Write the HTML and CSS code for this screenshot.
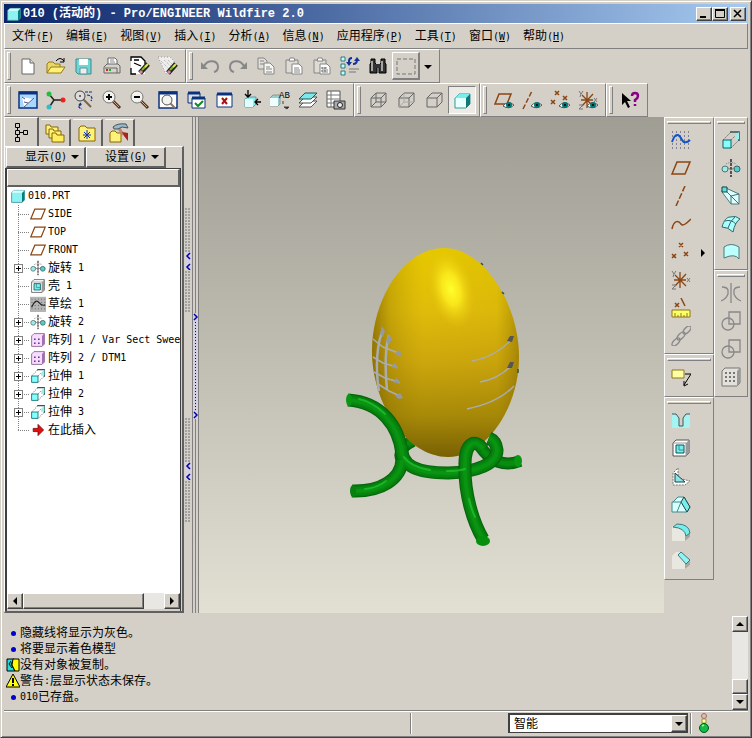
FILE: index.html
```html
<!DOCTYPE html>
<html lang="zh-CN">
<head>
    <meta charset="UTF-8">
    <meta name="viewport" content="width=device-width, initial-scale=1.0">
    <title>010 (活动的) - Pro/ENGINEER Wildfire 2.0</title>
    <link rel="stylesheet" href="styles.css">
</head>
<body>
    <svg class="defs" width="0" height="0" aria-hidden="true">
        <defs>
            <!-- iconos del árbol y de las barras -->
            <symbol id="plane" viewBox="0 0 20 20"><path d="M1 16L6 4H19L14 16Z" fill="none" stroke="#8b4513" stroke-width="1.5"/></symbol>
            <symbol id="part" viewBox="0 0 20 20"><path d="M2 6L5 3H18V15L15 18H2Z" fill="#8ef2f2" stroke="#3a8f94" /><path d="M15 6L18 3V15L15 18Z" fill="#067d80"/><path d="M2 6L5 3H18L15 6Z" fill="#d8ffff"/></symbol>
            <symbol id="revolve" viewBox="0 0 20 20"><path d="M10 1V19" stroke="#000" stroke-width="1.2" stroke-dasharray="3 1"/><path d="M5 6Q10 3 15 6" fill="none" stroke="#777" stroke-dasharray="1 1"/><circle cx="4" cy="11" r="3" fill="#a5e8e4" stroke="#477"/><circle cx="16" cy="11" r="3" fill="#5cc" stroke="#366"/><path d="M6 9L10 12L14 9" fill="none" stroke="#777"/></symbol>
            <symbol id="shell" viewBox="0 0 20 20"><path d="M2 5L5 2H18V15L15 18H2Z" fill="#fff" stroke="#555"/><path d="M15 5L18 2V15L15 18Z" fill="#999"/><path d="M2 5H15V18" fill="none" stroke="#999"/><path d="M5 7H13V15H5Z" fill="#7ee" stroke="#055"/><path d="M8 7V12H13" fill="none" stroke="#488"/></symbol>
            <symbol id="pattern" viewBox="0 0 20 20"><path d="M2 5L5 2H18V15L15 18H2Z" fill="#f6dcff" stroke="#858"/><path d="M15 5L18 2V15L15 18Z" fill="#a070b0"/><path d="M5 9h2M10 9h2M5 14h2M10 14h2" stroke="#639" stroke-width="2"/></symbol>
            <symbol id="extrude" viewBox="0 0 20 20"><path d="M2 10L10 2M10 18L18 10M10 10L14 6" fill="none" stroke="#777" stroke-dasharray="2 1"/><path d="M9 2H18V11" fill="none" stroke="#355" stroke-width="1.5"/><path d="M18 2L14 6V10L18 9Z" fill="#9ee"/><path d="M2 10H10V18H2Z" fill="#8ff" stroke="#066"/></symbol>
            <symbol id="eye" viewBox="0 0 20 20"><path d="M9 16Q14 10 20 15Q15 20 9 16Z" fill="#fff" stroke="#555"/><circle cx="15" cy="15" r="3" fill="#077"/><circle cx="15" cy="15" r="1" fill="#000"/></symbol>
            <symbol id="sketch" viewBox="0 0 20 20"><rect x="0" y="1" width="20" height="19" fill="#b4b4b4"/><path d="M2 4H19M2 8H19M2 12H19M2 16H19" stroke="#444" stroke-dasharray="1 3"/><path d="M2 14Q7 3 11 8T19 11" fill="none" stroke="#222" stroke-width="1.5"/></symbol>
            <symbol id="axis" viewBox="0 0 20 20"><path d="M5 20L14 0" stroke="#8b4513" stroke-width="1.5" stroke-dasharray="6 2"/></symbol>
            <symbol id="points" viewBox="0 0 20 20"><path d="M8 1l4 4m0-4l-4 4M1 12l4 4m0-4l-4 4M13 10l4 4m0-4l-4 4" stroke="#8b4513" stroke-width="1.5"/></symbol>
            <symbol id="csys" viewBox="0 0 20 20"><path d="M4 5L15 16M15 4L4 16M9 2V18M3 10H15" stroke="#8b4513" stroke-width="1.3"/><path d="M1 1l2 3l2-3M3 4l-1 3M16 8l3 4m0-4l-3 4M1 15h4l-4 4h4" fill="none" stroke="#777"/></symbol>
            <symbol id="lens" viewBox="0 0 20 20"><path d="M11 11L18 18" stroke="#532" stroke-width="3"/><path d="M11 11L17 17" stroke="#c9a78c"/><circle cx="7" cy="7" r="6" fill="#f2f2ee" stroke="#777"/></symbol>
            <symbol id="copy" viewBox="0 0 20 20"><path d="M2 2H8L11 5V13H2Z" fill="#e2dfd8" stroke="#858585"/><path d="M8 7H14L18 11V18H8Z" fill="#f6f6f3" stroke="#858585"/><path d="M4 5H8M4 8H8M10 11H14M10 13H16M10 16H16" stroke="#858585"/></symbol>
            <symbol id="paste" viewBox="0 0 20 20"><path d="M2 4H14V17H2Z" fill="#dedbd4" stroke="#858585"/><path d="M5 5L6 2H10L11 5Z" fill="#fff" stroke="#858585"/><path d="M8 8H15L18 11V18H8Z" fill="#fff" stroke="#858585"/><path d="M10 12H15M10 14H16M10 16H16" stroke="#858585"/></symbol>
            <symbol id="cube" viewBox="0 0 20 20"><path d="M3 8L8 3H18V12L13 17H3Z M3 8H13V17M13 8L18 3" fill="none" stroke="#666"/></symbol>
            <symbol id="pencil" viewBox="0 0 20 20"><path d="M10 17L18 8" stroke="#222" stroke-width="5"/><path d="M10 17L12 15" stroke="#d8a" stroke-width="3"/><path d="M12 14L17 9" stroke="#8b2" stroke-width="2"/><path d="M15 11L18 8" stroke="#dd6" stroke-width="2"/></symbol>
            <symbol id="intersect" viewBox="0 0 20 20"><path d="M8 1H19V13H8Z" fill="none" stroke="#888" stroke-width="1.3"/><circle cx="7" cy="13" r="6" fill="none" stroke="#888" stroke-width="1.3"/></symbol>
            <!-- piezas del modelo -->
            <path id="eggShape" d="M245 131C284 131 320 186 320 240C320 292 286 340 249 340C207 340 173 286 173 234C173 182 205 131 245 131Z"/>
            <g id="backLegs">
                <path d="M214 324C200 330 199 340 205 345"/>
                <path d="M281 329C291 345 306 350 321 344"/>
            </g>
            <g id="frontLegs">
                <path d="M149 283C182 285 200 309 203 337"/>
                <path d="M153 374C182 375 202 362 203 343"/>
                <path d="M203 328C200 350 220 356 249 356C278 355 298 347 298 333Q297 324 290 321"/>
            </g>
            <path id="loopLeg" d="M284 332C276 321 266 326 266 347C265 376 274 405 284 422"/>
            <linearGradient id="egg" x1="0" y1="0" x2="0" y2="1">
                <stop offset="0" stop-color="#e6c800"/>
                <stop offset="0.3" stop-color="#e0bc0a"/>
                <stop offset="0.55" stop-color="#cca60c"/>
                <stop offset="0.8" stop-color="#a88a08"/>
                <stop offset="1" stop-color="#786003"/>
            </linearGradient>
            <linearGradient id="eggSide" x1="0" y1="0" x2="1" y2="0">
                <stop offset="0" stop-color="#654e00" stop-opacity="0.6"/>
                <stop offset="0.12" stop-color="#705800" stop-opacity="0.25"/>
                <stop offset="0.35" stop-color="#a08000" stop-opacity="0"/>
                <stop offset="0.85" stop-color="#806500" stop-opacity="0.05"/>
                <stop offset="1" stop-color="#654e00" stop-opacity="0.4"/>
            </linearGradient>
            <radialGradient id="shine">
                <stop offset="0" stop-color="#ffff2c"/>
                <stop offset="0.4" stop-color="#fff020" stop-opacity="0.8"/>
                <stop offset="1" stop-color="#e8c810" stop-opacity="0"/>
            </radialGradient>
        </defs>
    </svg>

    <div class="window">
        <header class="title-bar">
            <svg class="title-icon"><use href="#part"/></svg>
            <h1>010 (活动的) - Pro/ENGINEER Wildfire 2.0</h1>
            <button class="win-btn" aria-label="最小化"><svg viewBox="0 0 12 10"><path d="M2 8H8" stroke="#000" stroke-width="2"/></svg></button>
            <button class="win-btn" aria-label="最大化"><svg viewBox="0 0 12 10"><path d="M1.500 2V8.500H10.500V2" fill="none" stroke="#000"/><path d="M1 1H11" stroke="#000" stroke-width="2"/></svg></button>
            <button class="win-btn close" aria-label="关闭"><svg viewBox="0 0 12 10"><path d="M2 1L9 8M9 1L2 8" stroke="#000" stroke-width="1.5"/></svg></button>
        </header>

        <nav class="menu-bar">
            <button>文件<span class="en">(<u>F</u>)</span></button>
            <button>编辑<span class="en">(<u>E</u>)</span></button>
            <button>视图<span class="en">(<u>V</u>)</span></button>
            <button>插入<span class="en">(<u>I</u>)</span></button>
            <button>分析<span class="en">(<u>A</u>)</span></button>
            <button>信息<span class="en">(<u>N</u>)</span></button>
            <button>应用程序<span class="en">(<u>P</u>)</span></button>
            <button>工具<span class="en">(<u>T</u>)</span></button>
            <button>窗口<span class="en">(<u>W</u>)</span></button>
            <button>帮助<span class="en">(<u>H</u>)</span></button>
        </nav>

        <div class="toolbar">
            <div class="tool-group">
                <button class="tool" aria-label="新建"><svg viewBox="0 0 20 20"><path d="M4 3H12L16 7V18H4Z" fill="#fff" stroke="#666"/><path d="M12 3V7H16" fill="#ddd" stroke="#666"/></svg></button>
                <button class="tool" aria-label="打开"><svg viewBox="0 0 20 20"><path d="M1 17V8L3 6H7L9 8H14V11" fill="#e8d868" stroke="#997a10"/><path d="M1 17L5 11H19L15 17Z" fill="#fff27a" stroke="#997a10"/><path d="M10 5Q14 0 18 5M18 2V6H14" fill="none" stroke="#000"/></svg></button>
                <button class="tool" aria-label="保存"><svg viewBox="0 0 20 20"><path d="M2 3H17V18H4L2 16Z" fill="#6fd6d6" stroke="#488"/><path d="M5 3H14V9H5Z" fill="#fff"/><path d="M6 12H13V18H6Z" fill="#eee" stroke="#599"/></svg></button>
                <button class="tool" aria-label="打印"><svg viewBox="0 0 20 20"><path d="M6 9V2H13L15 4V9" fill="#fff" stroke="#666"/><path d="M8 4H12M8 6H13" stroke="#888"/><path d="M2 11L5 8H16L18 10V17H2Z" fill="#d6d3cb" stroke="#666"/><path d="M3 12H15V17" fill="none" stroke="#666"/><path d="M4 14H6" stroke="#c22" stroke-width="2"/><path d="M7 14H9" stroke="#2a2" stroke-width="2"/></svg></button>
                <button class="tool" aria-label="拭除当前"><svg viewBox="0 0 20 20"><path d="M1 1H11L15 5V18H1Z" fill="#fff"/><path d="M1 5V1H11L15 5V8M1 12V18H6M4 4H9M4 7L11 10" fill="none" stroke="#000" stroke-width="1.3"/><use href="#pencil"/></svg></button>
                <button class="tool" aria-label="拭除不显示"><svg viewBox="0 0 20 20"><path d="M0 1H12L16 5V9L8 18Z" fill="#eee" stroke="#999" stroke-dasharray="1 2"/><path d="M3 5L12 14M6 4L15 12M10 4L15 9" stroke="#aaa" stroke-dasharray="1 1"/><use href="#pencil"/></svg></button>
            </div>
            <div class="tool-group">
                <button class="tool" aria-label="撤消"><svg viewBox="0 0 20 20"><path d="M4 10C8 3 18 4 18 11Q18 15 14 16" fill="none" stroke="#888" stroke-width="2"/><path d="M1 6V13H8Z" fill="#888"/></svg></button>
                <button class="tool" aria-label="重做"><svg viewBox="0 0 20 20"><path d="M16 10C12 3 2 4 2 11Q2 15 6 16" fill="none" stroke="#888" stroke-width="2"/><path d="M19 6V13H12Z" fill="#888"/></svg></button>
                <button class="tool" aria-label="复制"><svg><use href="#copy"/></svg></button>
                <button class="tool" aria-label="粘贴"><svg><use href="#paste"/></svg></button>
                <button class="tool" aria-label="选择性粘贴"><svg viewBox="0 0 20 20"><use href="#paste"/><path d="M10 11v6M13 11v6" stroke="#666" stroke-dasharray="2 1"/></svg></button>
                <button class="tool" aria-label="再生"><svg viewBox="0 0 20 20"><path d="M1 1H5V5H1ZM1 8H5V12H1ZM1 15H5V19H1Z" fill="#bff" stroke="#377"/><path d="M9 7V5Q9 2 12 2M13 8Q17 8 17 4" fill="none" stroke="#139" stroke-width="2"/><path d="M6 6H12L9 10ZM14 5H20L17 1Z" fill="#139"/><path d="M9 13H19M9 16H16" stroke="#777"/></svg></button>
                <button class="tool" aria-label="查找"><svg viewBox="0 0 20 20"><path d="M3 3H7V7L9 9V17H2V8L3 7ZM13 3H17V7L18 8V17H11V9L13 7Z" fill="#333" stroke="#000"/><path d="M8 8H12V12H8Z" fill="#333"/><path d="M4 5V15M14 5V15" stroke="#ccc" stroke-width="1.5"/></svg></button>
                <button class="tool raised" aria-label="选取"><svg viewBox="0 0 20 20"><path d="M1 3H19V18H1Z" fill="none" stroke="#777" stroke-dasharray="4 2"/></svg></button>
                <button class="drop" aria-label="选取选项"><i class="arrow-down"></i></button>
            </div>
        </div>

        <div class="toolbar">
            <div class="tool-group">
                <button class="tool" aria-label="重画"><svg viewBox="0 0 20 20"><path d="M1 2H19V18H1Z" fill="#a8d8ff" stroke="#0a3280" stroke-width="1.5"/><path d="M1 3H19" stroke="#0a3280" stroke-width="3"/><path d="M4 7L15 9L6 17Z" fill="#fff"/><path d="M6 17L16 8" stroke="#568"/><path d="M4 7l3 2M6 12l4 1" stroke="#557"/></svg></button>
                <button class="tool" aria-label="旋转中心"><svg viewBox="0 0 20 20"><path d="M3 4L8 10L4 16M8 10H17" fill="none" stroke="#222" stroke-width="1.5"/><circle cx="3" cy="4" r="2.500" fill="#2b4"/><circle cx="3" cy="17" r="2.500" fill="#3bc"/><circle cx="17" cy="10" r="2.500" fill="#e22"/></svg></button>
                <button class="tool" aria-label="定向模式"><svg viewBox="0 0 20 20"><path d="M9 9L17 17" stroke="#764" stroke-width="2"/><circle cx="6" cy="6" r="5" fill="#ddd" stroke="#444"/><circle cx="6" cy="6" r="1" fill="#444"/><path d="M11 2H18M13 5Q20 6 17 11M7 13Q2 17 8 19M5 16l3-2" fill="none" stroke="#138" stroke-width="1.2" stroke-dasharray="3 1"/></svg></button>
                <button class="tool" aria-label="放大"><svg viewBox="0 0 20 20"><use href="#lens"/><path d="M4 7H10M7 4V10" stroke="#000" stroke-width="2"/></svg></button>
                <button class="tool" aria-label="缩小"><svg viewBox="0 0 20 20"><use href="#lens"/><path d="M4 7H10" stroke="#000" stroke-width="2"/></svg></button>
                <button class="tool" aria-label="重新调整"><svg viewBox="0 0 20 20"><path d="M1 2H19V18H1Z" fill="#fff" stroke="#0a3280" stroke-width="1.5"/><path d="M1 3H19" stroke="#0a3280" stroke-width="3"/><path d="M12 13L17 18" stroke="#876" stroke-width="2"/><circle cx="9" cy="10" r="5" fill="#f4f4f0" stroke="#555"/></svg></button>
                <button class="tool" aria-label="激活"><svg viewBox="0 0 20 20"><path d="M2 3H14V13H2Z" fill="#ddd" stroke="#0a3280"/><path d="M2 3H14" stroke="#0a3280" stroke-width="3"/><path d="M6 8H19V18H6Z" fill="#fff" stroke="#0a3280"/><path d="M6 8H19" stroke="#0a3280" stroke-width="3"/><path d="M9 13L12 16L17 11" fill="none" stroke="#182" stroke-width="2"/></svg></button>
                <button class="tool" aria-label="关闭窗口"><svg viewBox="0 0 20 20"><path d="M3 4H18V17H3Z" fill="#fff" stroke="#0a3280"/><path d="M3 4H18" stroke="#0a3280" stroke-width="3"/><path d="M8 8L13 14M13 8L8 14" stroke="#a11" stroke-width="2"/></svg></button>
                <button class="tool" aria-label="保存视图"><svg viewBox="0 0 20 20"><path d="M3 9L6 7H14V14L11 17H3Z" fill="#8ee" stroke="#699"/><path d="M3 9H11V17H3Z" fill="#dff"/><path d="M6 0V7M3 4L6 7L9 4M19 12H13M16 9L13 12L16 15" fill="none" stroke="#000" stroke-width="1.3"/></svg></button>
                <button class="tool" aria-label="视图列表"><svg viewBox="0 0 20 20"><path d="M0 8L3 5H10V14L8 16H0Z" fill="#9cc" stroke="#899"/><path d="M0 8H8V16H0Z" fill="#efffff"/><path d="M13 11v3M14 17h5l-2 2z" stroke="#444" fill="#222"/><text x="9" y="8" font-size="9" font-family="Liberation Mono">AB</text></svg></button>
                <button class="tool" aria-label="层"><svg viewBox="0 0 20 20"><path d="M1 17L7 11H19L13 17Z" fill="#fff" stroke="#555"/><path d="M1 13L7 7H19L13 13Z" fill="#fff" stroke="#455"/><path d="M1 9L7 3H19L13 9Z" fill="#7de8ec" stroke="#255"/></svg></button>
                <button class="tool" aria-label="视图管理器"><svg viewBox="0 0 20 20"><path d="M1 1H14V17H1Z" fill="#fff" stroke="#555"/><path d="M1 5H14M1 9H14M1 13H10M5 1V17" stroke="#777"/><path d="M8 11H19V19H8Z" fill="#aaa" stroke="#333"/><circle cx="14" cy="15" r="2.500" fill="#eee" stroke="#222"/></svg></button>
            </div>
            <div class="tool-group">
                <button class="tool" aria-label="线框"><svg viewBox="0 0 20 20"><use href="#cube"/><path d="M3 17L8 12H18M8 3V12" fill="none" stroke="#666"/></svg></button>
                <button class="tool" aria-label="隐藏线"><svg viewBox="0 0 20 20"><use href="#cube"/><path d="M3 17L8 12H18M8 3V12" fill="none" stroke="#aaa"/></svg></button>
                <button class="tool" aria-label="无隐藏线"><svg><use href="#cube"/></svg></button>
                <button class="tool pressed" aria-label="着色"><svg viewBox="0 0 20 20"><path d="M3 8L7 4H18V14L14 18H3Z" fill="#e6ffff" stroke="#399"/><path d="M3 8L7 4H18L14 8Z" fill="#7ee"/><path d="M14 8L18 4V14L14 18Z" fill="#177"/></svg></button>
            </div>
            <div class="tool-group">
                <button class="tool" aria-label="基准平面开关"><svg viewBox="0 0 20 20"><path d="M1 14L5 4H17L13 14Z" fill="none" stroke="#8b4513" stroke-width="1.5"/><use href="#eye"/></svg></button>
                <button class="tool" aria-label="基准轴开关"><svg viewBox="0 0 20 20"><path d="M1 19L10 1" stroke="#8b4513" stroke-width="1.5" stroke-dasharray="5 2"/><use href="#eye"/></svg></button>
                <button class="tool" aria-label="基准点开关"><svg viewBox="0 0 20 20"><path d="M5 1l4 4m0-4l-4 4M1 10l4 4m0-4l-4 4M13 6l4 4m0-4l-4 4" stroke="#8b4513" stroke-width="1.5"/><use href="#eye"/></svg></button>
                <button class="tool" aria-label="坐标系开关"><svg viewBox="0 0 20 20"><use href="#csys"/><use href="#eye"/></svg></button>
            </div>
            <div class="tool-group">
                <button class="tool" aria-label="上下文帮助"><svg viewBox="0 0 20 20"><path d="M2 3V15L5 12L8 18L10 17L7 11H11Z" fill="#000"/><path d="M12 6Q12 3 15 3Q18 3 18 6Q18 8 15 10V12M15 14V16" fill="none" stroke="#808" stroke-width="2.5"/></svg></button>
            </div>
        </div>

        <main class="workspace">
            <aside class="navigator">
                <div class="tabs">
                    <button class="tab active" aria-label="模型树"><svg viewBox="0 0 20 20"><path d="M4.500 1.500H8.500V5.500H4.500ZM4.500 8.500H8.500V12.500H4.500ZM4.500 15.500H8.500V19.500H4.500ZM12.500 8.500H16.500V12.500H12.500ZM6.500 5.500V8.500M6.500 12.500V15.500M8.500 10.500H12.500" fill="none" stroke="#000"/></svg></button>
                    <button class="tab" aria-label="文件夹"><svg viewBox="0 0 20 20"><path d="M1 2H5L6 4H13V11H1Z" fill="#fff27a" stroke="#860"/><path d="M4 6H8L9 8H16V15H4Z" fill="#fff27a" stroke="#860"/><path d="M7 10H11L12 12H19V19H7Z" fill="#ffef60" stroke="#860"/></svg></button>
                    <button class="tab" aria-label="收藏夹"><svg viewBox="0 0 20 20"><path d="M2 5L4 3H8L10 5H18V18H2Z" fill="#fff27a" stroke="#860"/><path d="M10 7V16M6 12H14M7 9L13 15M13 9L7 15" stroke="#13a"/></svg></button>
                    <button class="tab" aria-label="连接"><svg viewBox="0 0 20 20"><path d="M1 10L3 8H6L8 10H12V19H1Z" fill="#fff27a" stroke="#860"/><path d="M10 5L14 12" stroke="#b87" stroke-width="3"/><path d="M4 4Q8 0 17 1L19 5L13 4L9 6H5Z" fill="#9bc" stroke="#455"/><path d="M13 9L19 10V18L15 13Z" fill="#a22"/></svg></button>
                </div>
                <div class="nav-panel">
                    <div class="nav-actions">
                        <button>显示<span class="en">(<u>O</u>)</span><i class="arrow-down"></i></button>
                        <button>设置<span class="en">(<u>G</u>)</span><i class="arrow-down"></i></button>
                    </div>
                    <div class="tree-box">
                        <div class="tree-head"></div>
                        <div class="tree">
                            <div class="node root"><svg><use href="#part"/></svg><span class="en">010.PRT</span></div>
                            <ul>
                                <li class="node"><span class="branch"></span><svg><use href="#plane"/></svg><span class="en">SIDE</span></li>
                                <li class="node"><span class="branch"></span><svg><use href="#plane"/></svg><span class="en">TOP</span></li>
                                <li class="node"><span class="branch"></span><svg><use href="#plane"/></svg><span class="en">FRONT</span></li>
                                <li class="node"><span class="branch"><button class="expand" aria-label="展开"></button></span><svg><use href="#revolve"/></svg>旋转<span class="en"> 1</span></li>
                                <li class="node"><span class="branch"></span><svg><use href="#shell"/></svg>壳<span class="en"> 1</span></li>
                                <li class="node"><span class="branch"></span><svg><use href="#sketch"/></svg>草绘<span class="en"> 1</span></li>
                                <li class="node"><span class="branch"><button class="expand" aria-label="展开"></button></span><svg><use href="#revolve"/></svg>旋转<span class="en"> 2</span></li>
                                <li class="node"><span class="branch"><button class="expand" aria-label="展开"></button></span><svg><use href="#pattern"/></svg>阵列<span class="en"> 1 / Var Sect Swee</span></li>
                                <li class="node"><span class="branch"><button class="expand" aria-label="展开"></button></span><svg><use href="#pattern"/></svg>阵列<span class="en"> 2 / DTM1</span></li>
                                <li class="node"><span class="branch"><button class="expand" aria-label="展开"></button></span><svg><use href="#extrude"/></svg>拉伸<span class="en"> 1</span></li>
                                <li class="node"><span class="branch"><button class="expand" aria-label="展开"></button></span><svg><use href="#extrude"/></svg>拉伸<span class="en"> 2</span></li>
                                <li class="node"><span class="branch"><button class="expand" aria-label="展开"></button></span><svg><use href="#extrude"/></svg>拉伸<span class="en"> 3</span></li>
                                <li class="node last"><span class="branch"></span><svg viewBox="0 0 20 20"><path d="M4 8H10V3L17 10L10 17V12H4Z" fill="#d11" stroke="#700"/></svg>在此插入</li>
                            </ul>
                        </div>
                        <div class="scroll-h">
                            <button class="scroll-btn" aria-label="向左"><i class="arrow-left"></i></button>
                            <div class="thumb"></div>
                            <button class="scroll-btn" aria-label="向右"><i class="arrow-right"></i></button>
                        </div>
                    </div>
                </div>
            </aside>

            <div class="sash">
                <div class="sash-grips">
                    <div class="grip"><svg viewBox="0 0 6 18"><path d="M5 1L2 4L5 7M5 12L2 15L5 18" fill="none" stroke="#00a" stroke-width="1.5"/></svg></div>
                    <div class="grip"><svg viewBox="0 0 6 18"><path d="M5 1L2 4L5 7M5 12L2 15L5 18" fill="none" stroke="#00a" stroke-width="1.5"/></svg></div>
                </div>
                <div class="sash-line">
                    <div class="sash-handle">
                        <svg viewBox="0 0 5 8"><path d="M1 1L4 4L1 7" fill="none" stroke="#00a" stroke-width="1.5"/></svg>
                        <svg viewBox="0 0 5 8"><path d="M1 1L4 4L1 7" fill="none" stroke="#00a" stroke-width="1.5"/></svg>
                    </div>
                </div>
            </div>

            <section class="viewport">
                <svg viewBox="0 0 465 496" role="img" aria-label="010.PRT">
                    <g fill="none">
                        <use href="#backLegs" stroke="#04640a" stroke-width="12"/>
                        <use href="#backLegs" stroke="#067a0c" stroke-width="9"/>
                        <use href="#backLegs" stroke="#088c10" stroke-width="5"/>
                    </g>
                    <ellipse cx="319" cy="344" rx="4" ry="6" fill="#099612"/>
                    <use href="#eggShape" fill="url(#egg)"/>
                    <use href="#eggShape" fill="url(#eggSide)"/>
                    <ellipse cx="252" cy="172" rx="22" ry="40" fill="url(#shine)" transform="rotate(-14 252 172)"/>
                    <g fill="none" stroke="#a9adb0" stroke-width="1.5">
                        <path d="M184 213C178 226 176 250 180 274M190 218C186 232 186 252 188 273" stroke-width="2.500"/>
                        <path d="M174 222L184 230L202 237M174 240L184 246L198 250M175 255L186 261L200 265M179 267L190 274L203 280"/>
                        <path d="M273 244Q296 240 312 223"/>
                        <path d="M281 265Q299 262 312 249M268 292Q299 286 315 269"/>
                    </g>
                    <path d="M196 237L199 233L203 237V240ZM192 250L196 246L199 250V252ZM194 265L198 261L201 265V267ZM196 279L201 276L204 281L200 282ZM181 217L183 209L186 214L184 220ZM187 224L190 217L193 222L190 228Z" fill="#9599a0"/>
                    <path d="M308 224L311 219L315 219L313 225ZM308 251L311 245L315 245L313 251Z" fill="#555"/>
                    <path d="M282 146l2 2M303 175l2 2M319 252v4" stroke="#353" stroke-width="1.5"/>
                    <!-- patas y aro -->
                    <g fill="none">
                        <use href="#frontLegs" stroke="#04640a" stroke-width="13"/>
                        <use href="#frontLegs" stroke="#067a0c" stroke-width="11"/>
                        <use href="#frontLegs" stroke="#078610" stroke-width="8"/>
                        <use href="#frontLegs" stroke="#099412" stroke-width="4"/>
                        <use href="#loopLeg" stroke="#04640a" stroke-width="13"/>
                        <use href="#loopLeg" stroke="#067a0c" stroke-width="11"/>
                        <use href="#loopLeg" stroke="#078610" stroke-width="8"/>
                        <use href="#loopLeg" stroke="#099412" stroke-width="4"/>
                        <path d="M160 282Q174 285 186 297M205 340Q212 350 231 353M166 372Q178 371 187 364M248 354Q260 354 266 352M270 382Q272 391 276 400" stroke="#25c530" stroke-width="2" stroke-linecap="round" stroke-opacity="0.7"/>
                    </g>
                    <ellipse cx="284" cy="424" rx="7" ry="5" fill="#068f0c"/>
                    <ellipse cx="150" cy="283" rx="3" ry="6" fill="#099612"/>
                    <ellipse cx="154" cy="374" rx="3" ry="6" fill="#078010"/>
                </svg>
            </section>

            <div class="side-tools wide">
                <div class="side-group">
                    <button class="tool" aria-label="草绘"><svg viewBox="0 0 20 20"><path d="M1 2H20M1 6H20M1 10H20M1 14H20M1 18H20" stroke="#336" stroke-dasharray="1 3"/><path d="M1 12C5 0 9 6 11 10S17 12 19 10" fill="none" stroke="#15c" stroke-width="2"/></svg></button>
                    <button class="tool" aria-label="平面"><svg><use href="#plane"/></svg></button>
                    <button class="tool" aria-label="轴"><svg><use href="#axis"/></svg></button>
                    <button class="tool" aria-label="曲线"><svg viewBox="0 0 20 20"><path d="M1 15C3 5 8 7 10 10S17 8 20 5" fill="none" stroke="#8b4513" stroke-width="1.5"/></svg></button>
                    <div class="with-menu">
                        <button class="tool" aria-label="点"><svg><use href="#points"/></svg></button>
                        <button class="fly" aria-label="更多点"><i class="arrow-right"></i></button>
                    </div>
                    <button class="tool" aria-label="坐标系"><svg><use href="#csys"/></svg></button>
                    <button class="tool" aria-label="分析"><svg viewBox="0 0 20 20"><path d="M4 5l4 4m0-4l-4 4M10 0L14 8" stroke="#8b4513" stroke-width="1.5"/><path d="M1 12H19V19H1Z" fill="#ff6" stroke="#872"/><path d="M4 19V15M7 19V17M10 19V15M13 19V17M16 19V15" stroke="#872"/></svg></button>
                    <button class="tool" aria-label="参照"><svg viewBox="0 0 20 20"><g fill="none" stroke="#888" stroke-width="1.3"><ellipse cx="5" cy="16" rx="5" ry="2.500" transform="rotate(-45 5 16)"/><ellipse cx="10" cy="10" rx="5" ry="2.500" transform="rotate(-45 10 10)"/><ellipse cx="16" cy="4" rx="5" ry="2.500" transform="rotate(-45 16 4)"/></g></svg></button>
                </div>
                <div class="side-group">
                    <button class="tool" aria-label="注释"><svg viewBox="0 0 20 20"><path d="M1 3H13V11H1Z" fill="#ffffa0" stroke="#872"/><path d="M14 7H20L13 18M13 14V19L17 17" fill="none" stroke="#000"/></svg></button>
                </div>
                <div class="side-group">
                    <button class="tool" aria-label="孔"><svg viewBox="0 0 20 20"><path d="M1 4H5L8 8V16H12V8L15 4H19V18H1Z" fill="#a4f4f4"/><path d="M1 4H5L8 8V16H12V8L15 4H19" fill="none" stroke="#455"/></svg></button>
                    <button class="tool" aria-label="壳"><svg><use href="#shell"/></svg></button>
                    <button class="tool" aria-label="筋"><svg viewBox="0 0 20 20"><path d="M7 2V12L19 15L14 19H2V7Z" fill="#fff" stroke="#777" stroke-dasharray="2 1"/><path d="M4 7V16H14Z" fill="#8fe5e5" stroke="#144"/></svg></button>
                    <button class="tool" aria-label="拔模"><svg viewBox="0 0 20 20"><path d="M2 8L7 3H13L19 13L16 18H1V8Z" fill="#d8ffff" stroke="#488"/><path d="M10 8L13 3L19 13L16 18Z" fill="#7ee" stroke="#244"/><path d="M2 8H10L6 18" fill="none" stroke="#488"/></svg></button>
                    <button class="tool" aria-label="倒圆角"><svg viewBox="0 0 20 20"><path d="M1 5L5 2Q18 2 19 12V15L14 19H1Z" fill="#e8e8e0"/><path d="M14 19L19 15V11L14 14Z" fill="#aaa79f"/><path d="M6 2Q18 2 19 11L15 14Q14 6 2 5Z" fill="#7ee" stroke="#477"/></svg></button>
                    <button class="tool" aria-label="倒角"><svg viewBox="0 0 20 20"><path d="M1 6L5 2H10L19 10V15L14 19H1Z" fill="#e8e8e0"/><path d="M14 19L19 15V10L14 14Z" fill="#aaa79f"/><path d="M10 2L19 10L15 14L7 5Z" fill="#8ef4f4" stroke="#477"/></svg></button>
                </div>
            </div>

            <div class="side-tools">
                <div class="side-group">
                    <button class="tool" aria-label="拉伸"><svg><use href="#extrude"/></svg></button>
                    <button class="tool" aria-label="旋转"><svg><use href="#revolve"/></svg></button>
                    <button class="tool" aria-label="可变剖面扫描"><svg viewBox="0 0 20 20"><path d="M2 1L7 3L18 8V18H10L1 6Z" fill="#dff" stroke="#577"/><path d="M1 1H6V6H1Z" fill="#6dd" stroke="#144"/><path d="M6 6L18 18M10 18V10L18 8" fill="none" stroke="#377"/></svg></button>
                    <button class="tool" aria-label="边界混合"><svg viewBox="0 0 20 20"><path d="M1 13C3 6 6 3 9 3Q15 1 19 5Q14 8 12 18Q7 13 1 13Z" fill="#aff" stroke="#366"/><path d="M4 7Q10 5 15 10M7 14Q9 7 14 3" fill="none" stroke="#366"/></svg></button>
                    <button class="tool" aria-label="造型"><svg viewBox="0 0 20 20"><path d="M3 5Q10 0 18 5V17Q14 11 3 16Z" fill="#bff" stroke="#577"/></svg></button>
                </div>
                <div class="side-group">
                    <button class="tool" aria-label="镜像"><svg viewBox="0 0 20 20"><path d="M10 0V20" stroke="#888" stroke-width="1.3"/><path d="M1 4Q6 4 7 7V11Q5 16 0 18M19 4Q14 4 13 7V11Q15 16 20 18" fill="none" stroke="#888" stroke-width="1.3"/></svg></button>
                    <button class="tool" aria-label="合并"><svg><use href="#intersect"/></svg></button>
                    <button class="tool" aria-label="修剪"><svg><use href="#intersect"/></svg></button>
                    <button class="tool" aria-label="阵列"><svg viewBox="0 0 20 20"><path d="M1 4L4 1H19V16L16 19H1Z" fill="#e4e1db" stroke="#777"/><path d="M16 4L19 1V16L16 19Z" fill="#999"/><path d="M4 6H15M4 10H15M4 14H15" stroke="#777" stroke-width="2" stroke-dasharray="2 2"/></svg></button>
                </div>
            </div>
        </main>

        <section class="messages">
            <ul>
                <li><span class="mark"><i class="dot"></i></span>隐藏线将显示为灰色。</li>
                <li><span class="mark"><i class="dot"></i></span>将要显示着色模型</li>
                <li><span class="mark"><svg viewBox="0 0 14 14"><path d="M1 1H8L5 6L9 13H1Z" fill="#2dd" stroke="#000"/><path d="M7 1H13V13H9L6 7Z" fill="#ff0" stroke="#000"/><path d="M5 3L3 6L6 10" fill="none" stroke="#000"/></svg></span>没有对象被复制。</li>
                <li><span class="mark"><svg viewBox="0 0 14 14"><path d="M7 0L14 13H0Z" fill="#ff0" stroke="#000"/><path d="M7 4V9M7 10V12" stroke="#000" stroke-width="2"/></svg></span>警告<span class="en">:</span>层显示状态未保存。</li>
                <li><span class="mark"><i class="dot"></i></span><span class="en">010</span>已存盘。</li>
            </ul>
            <div class="scroll-v">
                <button class="scroll-btn" aria-label="向上"><i class="arrow-up"></i></button>
                <div class="thumb"></div>
                <button class="scroll-btn" aria-label="向下"><i class="arrow-down"></i></button>
            </div>
        </section>

        <footer class="status-bar">
            <div class="status-text"></div>
            <div class="filter">
                <div class="combo">
                    <select aria-label="选取过滤器"><option>智能</option></select>
                    <span class="combo-arrow"><i class="arrow-down"></i></span>
                </div>
            </div>
            <div class="light"><svg viewBox="0 0 12 20"><circle cx="6" cy="3" r="2.500" fill="#dbb" stroke="#a66"/><path d="M4 6H8V10H4Z" fill="#ffa" stroke="#993"/><circle cx="6" cy="15" r="4.500" fill="#1b4" stroke="#052"/><path d="M4 13l2-1" stroke="#9f9" stroke-width="1.5"/></svg></div>
        </footer>
    </div>
</body>
</html>
```
FILE: styles.css
```css
body {
    margin: 0;
    background-color: #d4d0c8;
    color: #000;
    font-family: 'Liberation Sans', 'Noto Sans CJK SC', sans-serif;
    font-size: 12px;
    line-height: 16px;
}
button {
    margin: 0;
    padding: 0;
    border: none;
    background: none;
    color: inherit;
    font: inherit;
}
ul {
    margin: 0;
    padding: 0;
    list-style: none;
}
svg {
    display: block;
}
.defs {
    position: absolute;
}
.en {
    font-family: 'DejaVu Sans Mono', monospace;
    font-size: 10px;
    white-space: pre;
}
.window {
    box-sizing: border-box;
    min-height: 100vh;
    display: flex;
    flex-direction: column;
    padding: 3px;
    border: 1px solid #d4d0c8;
    border-right-color: #404040;
    border-bottom-color: #404040;
    box-shadow: inset 1px 1px #fff, inset -1px -1px #808080;
}

/* flechas */
.arrow-down,
.arrow-up,
.arrow-left,
.arrow-right {
    display: inline-block;
    width: 0;
    height: 0;
    border: 4px solid transparent;
}
.arrow-down {
    border-top-color: #000;
    border-bottom: none;
}
.arrow-up {
    border-bottom-color: #000;
    border-top: none;
}
.arrow-left {
    border-right-color: #000;
    border-left: none;
}
.arrow-right {
    border-left-color: #000;
    border-right: none;
}

/* barra de título */
.title-bar {
    display: flex;
    align-items: center;
    height: 19px;
    padding-right: 2px;
    background: linear-gradient(to right, #0a246a, #a6caf0);
}
.title-icon {
    width: 16px;
    height: 16px;
    margin: 0 1px 0 2px;
}
.title-bar h1 {
    flex: 1;
    margin: 0;
    color: #fff;
    font-family: 'Liberation Mono', 'Noto Sans CJK SC', monospace;
    font-size: 12px;
    font-weight: bold;
    white-space: nowrap;
}
.win-btn,
.scroll-btn,
.thumb,
.combo-arrow {
    box-sizing: border-box;
    background-color: #d4d0c8;
    border: 1px solid #fff;
    border-right-color: #404040;
    border-bottom-color: #404040;
    box-shadow: inset -1px -1px #808080;
}
.win-btn {
    width: 16px;
    height: 14px;
    padding: 1px;
}
.win-btn svg {
    width: 12px;
    height: 10px;
}
.win-btn.close {
    margin-left: 2px;
}

/* menú */
.menu-bar {
    display: flex;
    align-items: center;
    gap: 12px;
    box-sizing: border-box;
    height: 26px;
    padding-left: 7px;
    border: 1px solid #fff;
    border-right-color: #808080;
    border-bottom-color: #808080;
}
.menu-bar button {
    white-space: nowrap;
}

/* barras de herramientas */
.toolbar {
    display: flex;
    height: 34px;
}
.tool-group {
    display: flex;
    align-items: center;
    box-sizing: border-box;
    padding-right: 3px;
    border: 1px solid #fff;
    border-right-color: #808080;
    border-bottom-color: #808080;
}
.tool-group::before {
    content: "";
    width: 2px;
    height: 26px;
    margin: 0 3px 0 2px;
    border: 1px solid #fff;
    border-right-color: #808080;
    border-bottom-color: #808080;
}
.tool {
    box-sizing: border-box;
    display: flex;
    align-items: center;
    justify-content: center;
    width: 28px;
    height: 28px;
}
.tool svg {
    width: 20px;
    height: 20px;
}
.tool.raised {
    border: 1px solid #fff;
    border-right: 2px solid #808080;
    border-bottom: 2px solid #808080;
}
.tool.pressed {
    background-color: #ecebe6;
    border: 1px solid #808080;
    border-right-color: #fff;
    border-bottom-color: #fff;
}
.drop {
    width: 16px;
    height: 28px;
}
.drop .arrow-down {
    vertical-align: middle;
}

/* zona de trabajo */
.workspace {
    flex: 1;
    display: flex;
}
.navigator {
    display: flex;
    flex-direction: column;
    width: 180px;
}
.tabs {
    display: flex;
    align-items: flex-end;
    gap: 2px;
    height: 29px;
}
.tab {
    display: flex;
    align-items: center;
    justify-content: center;
    box-sizing: border-box;
    width: 30px;
    height: 27px;
    border-top: 1px solid #fff;
    border-right: 2px solid #606060;
}
.tab.active {
    width: 35px;
    height: 29px;
    border-left: 1px solid #fff;
}
.tab svg {
    width: 20px;
    height: 20px;
}
.nav-panel {
    flex: 1;
    display: flex;
    flex-direction: column;
    border: 1px solid #fff;
    border-right: 2px solid #606060;
    border-bottom: 2px solid #606060;
}
.nav-actions {
    display: flex;
    padding-left: 1px;
}
.nav-actions button {
    display: flex;
    align-items: center;
    box-sizing: border-box;
    width: 80px;
    height: 21px;
    padding-left: 18px;
    border: 1px solid #fff;
    border-right: 2px solid #606060;
    border-bottom: 2px solid #606060;
}
.nav-actions .arrow-down {
    margin-left: 4px;
}
.tree-box {
    flex: 1;
    display: flex;
    flex-direction: column;
    margin-right: 1px;
    border: 1px solid #404040;
    border-left-width: 2px;
    border-bottom: none;
}
.tree-head {
    box-sizing: border-box;
    height: 18px;
    background-color: #d4d0c8;
    border: 1px solid #fff;
    border-right: 2px solid #606060;
    border-bottom: 2px solid #606060;
}
.tree {
    flex: 1;
    background-color: #fff;
    overflow: hidden;
}
.node {
    display: flex;
    align-items: center;
    height: 18px;
    white-space: nowrap;
}
.node > svg {
    flex: none;
    width: 16px;
    height: 16px;
    margin-right: 2px;
}
.node.root {
    padding-left: 3px;
}
.branch {
    flex: none;
    display: flex;
    align-items: center;
    width: 23px;
    height: 18px;
    background-image: repeating-linear-gradient(to bottom, #808080 0 1px, transparent 1px 2px), repeating-linear-gradient(to right, #808080 0 1px, transparent 1px 2px);
    background-position: 11px 0, 11px 9px;
    background-size: 1px 18px, 12px 1px;
    background-repeat: no-repeat;
}
.last .branch {
    background-size: 1px 9px, 12px 1px;
}
.expand {
    width: 9px;
    height: 9px;
    margin-left: 7px;
    border: 1px solid #808080;
    background: linear-gradient(#000, #000) center / 5px 1px no-repeat, linear-gradient(#000, #000) center / 1px 5px no-repeat, #fff;
}
.scroll-h {
    display: flex;
    height: 16px;
    margin-bottom: 2px;
    background-color: #e9e7e3;
}
.scroll-h .thumb {
    flex: 1;
    margin-right: 20px;
}
.scroll-btn {
    display: flex;
    align-items: center;
    justify-content: center;
    width: 16px;
    height: 16px;
}

/* divisor */
.sash {
    display: flex;
    width: 15px;
}
.sash-grips {
    display: flex;
    flex-direction: column;
    align-items: center;
    gap: 105px;
    width: 8px;
    padding-top: 91px;
}
.grip {
    display: flex;
    align-items: center;
    width: 6px;
    height: 105px;
    background: radial-gradient(circle at 1px 1px, #a0a0a0 0 1px, transparent 1px) 0 0 / 3px 3px;
}
.grip svg {
    width: 6px;
    height: 18px;
    background-color: #d4d0e0;
}
.sash-line {
    display: flex;
    flex-direction: column;
    align-items: center;
    flex: 1;
    padding-top: 196px;
    border-right: 1px solid #808080;
    border-left: 1px solid #808080;
    background: linear-gradient(#808080, #808080) center / 1px 100% no-repeat;
}
.sash-handle {
    display: flex;
    flex-direction: column;
    justify-content: space-between;
    height: 106px;
    background: repeating-linear-gradient(to bottom, #00a 0 1px, #d4d0c8 1px 3px) center / 1px 100% no-repeat, #d4d0e0;
}
.sash-handle svg {
    width: 5px;
    height: 8px;
    background-color: #d4d0e0;
}

.viewport {
    flex: 1;
    min-width: 0;
    background: linear-gradient(to bottom, #a09e94, #e2dfd3);
}
.viewport svg {
    width: 100%;
    max-height: 100%;
}

/* herramientas laterales */
.side-tools {
    width: 34px;
}
.side-tools.wide {
    width: 50px;
}
.side-group {
    padding: 0 2px 3px;
    border: 1px solid #fff;
    border-right-color: #808080;
    border-bottom-color: #808080;
}
.side-group + .side-group {
    padding-bottom: 5px;
}
.side-group::before {
    content: "";
    display: block;
    height: 1px;
    margin: 3px 0 2px;
    border: 1px solid #fff;
    border-right-color: #808080;
    border-bottom-color: #808080;
}
.with-menu {
    display: flex;
}
.fly {
    width: 16px;
    height: 28px;
}
.fly .arrow-right {
    vertical-align: middle;
}

/* mensajes y estado */
.messages {
    display: flex;
    justify-content: space-between;
    box-sizing: border-box;
    height: 97px;
    padding-top: 3px;
}
.messages ul {
    padding-top: 9px;
}
.messages li {
    display: flex;
    align-items: center;
    height: 16px;
}
.mark {
    display: flex;
    justify-content: center;
    width: 14px;
    margin-left: 2px;
}
.mark svg {
    width: 14px;
    height: 14px;
}
.dot {
    width: 5px;
    height: 5px;
    border-radius: 50%;
    background-color: #0000d0;
}
.scroll-v {
    display: flex;
    flex-direction: column;
    justify-content: flex-end;
    width: 16px;
    background-color: #e9e7e3;
}
.scroll-v .scroll-btn:first-child {
    margin-bottom: auto;
}
.scroll-v .thumb {
    height: 15px;
}
.status-bar {
    display: flex;
    box-sizing: border-box;
    height: 24px;
    border-top: 1px solid #808080;
    box-shadow: inset 0 1px #fff;
}
.status-text {
    flex: 1;
    margin-top: 2px;
    border-right: 1px solid #808080;
}
.filter {
    display: flex;
    justify-content: flex-end;
    width: 278px;
    margin-top: 2px;
    border-left: 1px solid #fff;
    border-right: 1px solid #808080;
}
.combo {
    position: relative;
    width: 180px;
    height: 20px;
    margin-right: 2px;
}
.combo select {
    appearance: none;
    width: 100%;
    height: 20px;
    padding: 0 20px 0 4px;
    border: 1px solid #404040;
    border-width: 2px 1px 1px 2px;
    border-radius: 0;
    background-color: #fff;
    color: #000;
    font: inherit;
}
.combo-arrow {
    position: absolute;
    top: 2px;
    right: 1px;
    display: flex;
    align-items: center;
    justify-content: center;
    width: 16px;
    height: 17px;
    pointer-events: none;
}
.light {
    width: 57px;
    margin-top: 2px;
    padding-left: 6px;
    box-sizing: border-box;
    border-left: 1px solid #fff;
}
.light svg {
    width: 12px;
    height: 20px;
}
```
